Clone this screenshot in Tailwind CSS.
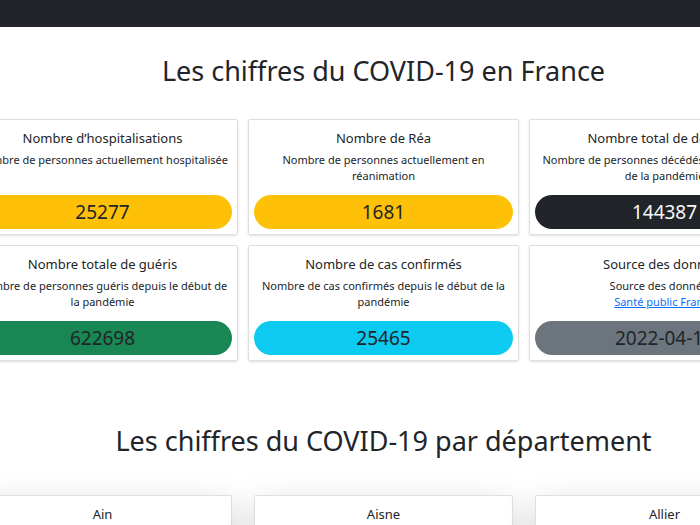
<!DOCTYPE html>
<html lang="fr">
<head>
<meta charset="utf-8">
<meta name="viewport" content="width=device-width, initial-scale=1">
<title>Les chiffres du COVID-19</title>
<script src="https://cdn.jsdelivr.net/npm/@tailwindcss/browser@4"></script>
</head>
<body class="h-screen overflow-hidden bg-white font-['Noto_Sans',sans-serif] text-[#212529]">
<header class="h-[27px] bg-[#212529]"></header>
<main class="-ml-[33px] -mr-[100px] text-center">
  <section>
    <h1 class="pt-6 pb-7 text-[27px] leading-10">Les chiffres du COVID-19 en France</h1>
    <div class="grid grid-cols-3 gap-[10px]">
      <article class="flex flex-col rounded-xs border border-[#dfdfdf] p-[5px] shadow-sm shadow-black/10">
        <h2 class="pt-[3px] text-[13px] leading-5">Nombre d’hospitalisations</h2>
        <p class="px-[2px] pt-1 text-[11px] leading-4">Nombre de personnes actuellement hospitalisée</p>
        <p class="mt-auto rounded-full bg-[#ffc107] text-[19px] leading-[34px]">25277</p>
      </article>
      <article class="flex flex-col rounded-xs border border-[#dfdfdf] p-[5px] shadow-sm shadow-black/10">
        <h2 class="pt-[3px] text-[13px] leading-5">Nombre de Réa</h2>
        <p class="px-[2px] pt-1 pb-[11px] text-[11px] leading-4">Nombre de personnes actuellement en réanimation</p>
        <p class="mt-auto rounded-full bg-[#ffc107] text-[19px] leading-[34px]">1681</p>
      </article>
      <article class="flex flex-col rounded-xs border border-[#dfdfdf] p-[5px] shadow-sm shadow-black/10">
        <h2 class="pt-[3px] text-[13px] leading-5">Nombre total de décédés</h2>
        <p class="px-[2px] pt-1 pb-[11px] text-[11px] leading-4">Nombre de personnes décédés depuis le début de la pandémie</p>
        <p class="mt-auto rounded-full bg-[#212529] text-[19px] leading-[34px] text-[#f8f9fa]">144387</p>
      </article>
      <article class="flex flex-col rounded-xs border border-[#dfdfdf] p-[5px] shadow-sm shadow-black/10">
        <h2 class="pt-[3px] text-[13px] leading-5">Nombre totale de guéris</h2>
        <p class="px-[2px] pt-1 pb-[11px] text-[11px] leading-4">Nombre de personnes guéris depuis le début de la pandémie</p>
        <p class="mt-auto rounded-full bg-[#198754] text-[19px] leading-[34px]">622698</p>
      </article>
      <article class="flex flex-col rounded-xs border border-[#dfdfdf] p-[5px] shadow-sm shadow-black/10">
        <h2 class="pt-[3px] text-[13px] leading-5">Nombre de cas confirmés</h2>
        <p class="px-[2px] pt-1 pb-[11px] text-[11px] leading-4">Nombre de cas confirmés depuis le début de la pandémie</p>
        <p class="mt-auto rounded-full bg-[#0dcaf0] text-[19px] leading-[34px]">25465</p>
      </article>
      <article class="flex flex-col rounded-xs border border-[#dfdfdf] p-[5px] shadow-sm shadow-black/10">
        <h2 class="pt-[3px] text-[13px] leading-5">Source des données</h2>
        <p class="px-[2px] pt-1 pb-[11px] text-[11px] leading-4">Source des données :<br><a href="#" class="text-[#0d6efd] underline">Santé public France</a></p>
        <p class="mt-auto rounded-full bg-[#6c757d] text-[19px] leading-[34px]">2022-04-14</p>
      </article>
    </div>
  </section>
  <section>
    <h1 class="pt-[60px] pb-[34px] text-[27px] leading-10">Les chiffres du COVID-19 par département</h1>
    <div class="grid grid-cols-3 gap-[22px] px-[6px]">
      <article class="h-64 rounded-xs border border-[#dfdfdf] bg-white p-[5px] shadow-[0_11px_34px_rgba(0,0,0,0.175)]">
        <h2 class="pt-[3px] text-[13px] leading-5">Ain</h2>
      </article>
      <article class="h-64 rounded-xs border border-[#dfdfdf] bg-white p-[5px] shadow-[0_11px_34px_rgba(0,0,0,0.175)]">
        <h2 class="pt-[3px] text-[13px] leading-5">Aisne</h2>
      </article>
      <article class="h-64 rounded-xs border border-[#dfdfdf] bg-white p-[5px] shadow-[0_11px_34px_rgba(0,0,0,0.175)]">
        <h2 class="pt-[3px] text-[13px] leading-5">Allier</h2>
      </article>
    </div>
  </section>
</main>
</body>
</html>
